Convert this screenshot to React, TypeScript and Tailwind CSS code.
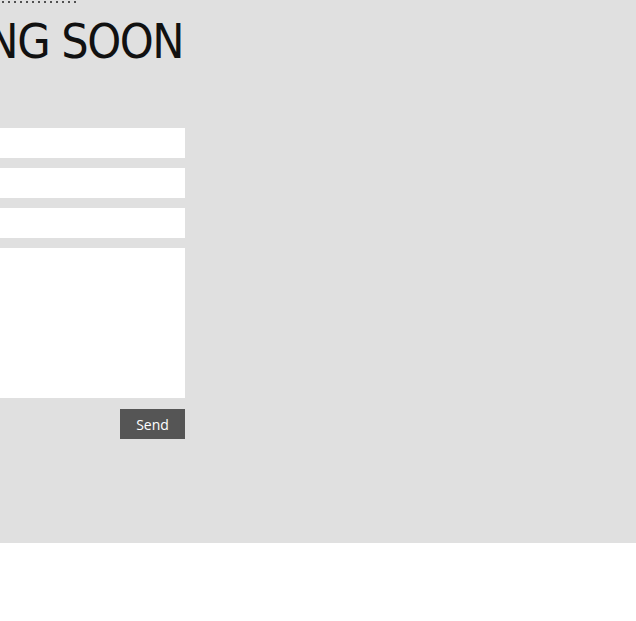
export default function App() {
  const dots = Array.from({ length: 13 }, (_, i) => i);
  return (
    <div className="min-h-[621px] bg-white font-['Open_Sans',sans-serif]">
      <div className="h-[543px] overflow-hidden bg-[#e0e0e0]">
        <div className="flex w-[185px] flex-col items-end">
          <div className="flex w-[185px] justify-start">
            <svg width="80" height="5" viewBox="0 0 80 5" className="block">
              {dots.map((i) => (
                <circle key={i} cx={3 + i * 6} cy={2} r={1} fill="#222" />
              ))}
            </svg>
          </div>
          <div className="mt-[10px] flex w-[185px] justify-end">
            <h1 className="whitespace-nowrap pr-[2px] font-['DejaVu_Sans',sans-serif] text-[48px] font-stretch-condensed font-normal leading-[52px] tracking-[-1.5px] text-[#111]">
              COMING SOON
            </h1>
          </div>
          <form className="mt-[61px] flex w-[400px] flex-col gap-[10px]">
            <input className="h-[30px] bg-white outline-none" />
            <input className="h-[30px] bg-white outline-none" />
            <input className="h-[30px] bg-white outline-none" />
            <textarea className="h-[150px] resize-none bg-white outline-none" />
            <div className="flex justify-end pt-px">
              <button
                type="button"
                className="h-[30px] w-[65px] bg-[#555] text-[14px] text-white"
              >
                Send
              </button>
            </div>
          </form>
        </div>
      </div>
    </div>
  );
}
